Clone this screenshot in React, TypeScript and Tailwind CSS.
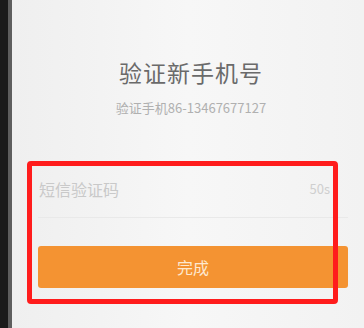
import React from 'react';

const App: React.FC = () => {
  return (
    <div
      className="w-[364px] h-[328px] flex overflow-hidden bg-[#f3f3f3]"
      style={{ fontFamily: '"Noto Sans CJK SC", "Noto Sans", sans-serif' }}
    >
      {/* Phone edge */}
      <div className="w-[8px] h-full bg-[#1b1b1b]" />
      <div className="w-[4px] h-full bg-[#5e5e5e]" />

      {/* Screen */}
      <div className="flex-1 flex flex-col bg-gradient-to-r from-[#efefef] via-[#f7f7f7] to-[#f2f2f2]">
        <div className="pt-[55px] flex flex-col items-center pl-[6px]">
          <h1 className="text-[23px] leading-[34px] text-[#6a6a6a] tracking-[1px]">验证新手机号</h1>
          <p className="mt-[9px] text-[13px] leading-[20px] text-[#b0b0b0]">验证手机86-13467677127</p>
        </div>

        {/* Form area */}
        <div className="relative mt-[43px] pl-[26px] pr-[16px]">
          <div className="flex items-center justify-between h-[57px] border-b border-[#e9e9e9] pr-[18px]">
            <span className="text-[16px] text-[#c9c9c9] pl-[1px]">短信验证码</span>
            <span className="text-[13px] text-[#cfcfcf]">50s</span>
          </div>
          <button className="mt-[28px] w-full h-[42px] rounded-[3px] bg-[#f49332] text-[16px] text-[#fde8cf] flex items-center justify-center">
            完成
          </button>

          {/* Highlight frame */}
          <div className="absolute left-[15px] top-0 w-[311px] h-[143px] border-[5px] border-[#ff1c1c] rounded-[4px] pointer-events-none" />
        </div>
      </div>
    </div>
  );
};

export default App;
